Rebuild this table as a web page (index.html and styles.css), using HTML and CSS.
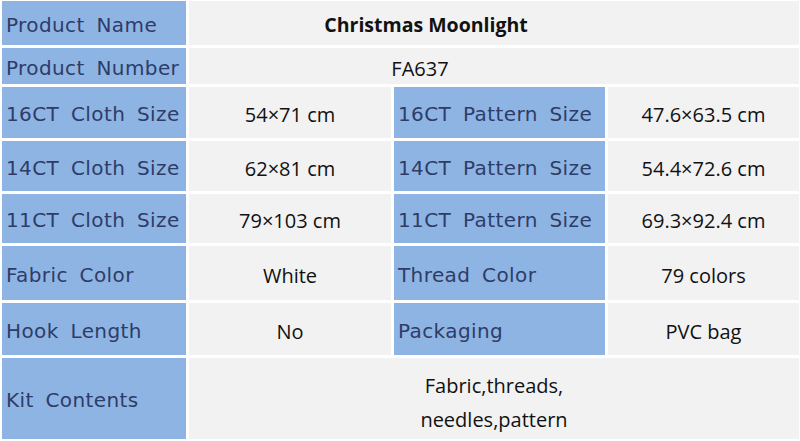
FILE: index.html
```html
<!DOCTYPE html>
<html lang="en">
<head>
<meta charset="utf-8">
<link rel="stylesheet" href="styles.css">
</head>
<body>
<div class="spec">
  <div class="lbl">Product Name</div>
  <div class="val span3 title">Christmas Moonlight</div>

  <div class="lbl">Product Number</div>
  <div class="val span3 number">FA637</div>

  <div class="lbl">16CT Cloth Size</div>
  <div class="val">54×71 cm</div>
  <div class="lbl">16CT Pattern Size</div>
  <div class="val">47.6×63.5 cm</div>

  <div class="lbl">14CT Cloth Size</div>
  <div class="val">62×81 cm</div>
  <div class="lbl">14CT Pattern Size</div>
  <div class="val">54.4×72.6 cm</div>

  <div class="lbl">11CT Cloth Size</div>
  <div class="val">79×103 cm</div>
  <div class="lbl">11CT Pattern Size</div>
  <div class="val">69.3×92.4 cm</div>

  <div class="lbl">Fabric Color</div>
  <div class="val">White</div>
  <div class="lbl">Thread Color</div>
  <div class="val">79 colors</div>

  <div class="lbl">Hook Length</div>
  <div class="val">No</div>
  <div class="lbl">Packaging</div>
  <div class="val">PVC bag</div>

  <div class="lbl">Kit Contents</div>
  <div class="val span3 kit">Fabric,threads,<br>needles,pattern</div>
</div>
</body>
</html>
```

FILE: styles.css
```css
html, body {
  margin: 0;
  padding: 0;
  background: #ffffff;
}

.spec {
  display: grid;
  grid-template-columns: 184px 202px 211px 191px;
  grid-template-rows: 44px 36px 51px 50px 49px 54px 52px 81px;
  gap: 3px;
  padding: 1px 0 0 2px;
}

.lbl {
  background: #8eb4e3;
  color: #2e3c68;
  font-family: "DejaVu Sans", sans-serif;
  font-size: 20px;
  letter-spacing: 0.4px;
  word-spacing: 5px;
  display: flex;
  align-items: center;
  padding: 3px 0 0 4px;
  white-space: nowrap;
  overflow: hidden;
}

.val {
  background: #f2f2f2;
  color: #111111;
  font-family: "Open Sans", sans-serif;
  font-size: 20px;
  display: flex;
  align-items: center;
  justify-content: center;
  text-align: center;
  padding-top: 4px;
  white-space: nowrap;
}

.span3 {
  grid-column: span 3;
}

.title {
  font-size: 19.5px;
  font-weight: 700;
  padding-right: 136px;
  padding-top: 2px;
}

.number {
  padding-right: 148px;
}

.kit {
  line-height: 34px;
  padding-top: 8px;
}
```
